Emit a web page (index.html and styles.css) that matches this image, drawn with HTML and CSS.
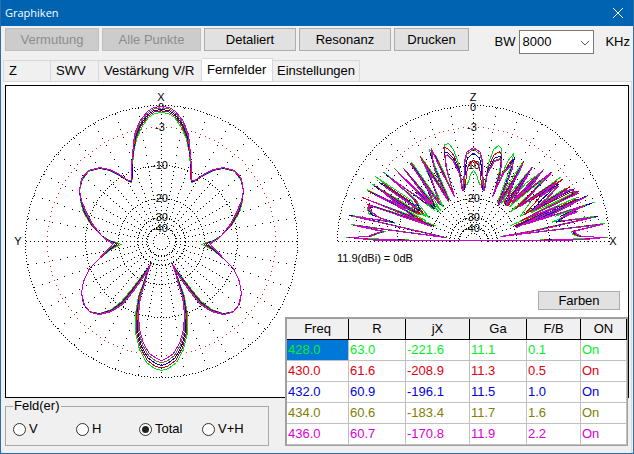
FILE: index.html
```html
<!DOCTYPE html>
<html lang="de">
<head>
    <meta charset="utf-8">
    <title>Graphiken</title>
    <link rel="stylesheet" href="styles.css">
</head>
<body>
    <div class="window">
        <header class="titlebar">
            <h1>Graphiken</h1>
            <button class="close" type="button" aria-label="Close">
                <svg width="10" height="10" viewBox="0 0 10 10"><path d="M0 0L10 10M10 0L0 10"/></svg>
            </button>
        </header>

        <div class="toolbar">
            <button class="btn guess" type="button" disabled>Vermutung</button>
            <button class="btn all" type="button" disabled>Alle Punkte</button>
            <button class="btn detail" type="button">Detaliert</button>
            <button class="btn reso" type="button">Resonanz</button>
            <button class="btn print" type="button">Drucken</button>
            <div class="bandwidth">
                <label for="bw">BW</label>
                <span class="combo">
                    <select id="bw"><option>8000</option></select>
                    <svg width="10" height="6" viewBox="0 0 10 6"><path d="M1 1L5 5L9 1"/></svg>
                </span>
                <span class="unit">KHz</span>
            </div>
        </div>

        <nav class="tabs" role="tablist">
            <button class="tab tab-z" type="button" role="tab">Z</button>
            <button class="tab tab-swv" type="button" role="tab">SWV</button>
            <button class="tab tab-gain" type="button" role="tab">Vestärkung V/R</button>
            <button class="tab tab-far active" type="button" role="tab" aria-selected="true">Fernfelder</button>
            <button class="tab tab-set" type="button" role="tab">Einstellungen</button>
        </nav>

        <main class="panel">
            <div class="charts">
                <svg id="azimuth" class="azimuth" width="312" height="311" viewBox="0 0 312 311"></svg>
                <svg id="elevation" class="elevation" width="310" height="311" viewBox="0 0 310 311"></svg>
            </div>

            <fieldset class="fields">
                <legend>Feld(er)</legend>
                <label><input type="radio" name="field">V</label>
                <label><input type="radio" name="field">H</label>
                <label><input type="radio" name="field" checked>Total</label>
                <label><input type="radio" name="field">V+H</label>
            </fieldset>

            <div class="results">
                <button class="btn colors" type="button">Farben</button>
                <table>
                    <colgroup>
                        <col class="c-freq"><col class="c-r"><col class="c-jx"><col class="c-ga"><col class="c-fb"><col class="c-on">
                    </colgroup>
                    <thead>
                        <tr><th>Freq</th><th>R</th><th>jX</th><th>Ga</th><th>F/B</th><th>ON</th></tr>
                    </thead>
                    <tbody>
                        <tr class="green"><td class="selected">428.0</td><td>63.0</td><td>-221.6</td><td>11.1</td><td>0.1</td><td>On</td></tr>
                        <tr class="red"><td>430.0</td><td>61.6</td><td>-208.9</td><td>11.3</td><td>0.5</td><td>On</td></tr>
                        <tr class="blue"><td>432.0</td><td>60.9</td><td>-196.1</td><td>11.5</td><td>1.0</td><td>On</td></tr>
                        <tr class="olive"><td>434.0</td><td>60.6</td><td>-183.4</td><td>11.7</td><td>1.6</td><td>On</td></tr>
                        <tr class="magenta"><td>436.0</td><td>60.7</td><td>-170.8</td><td>11.9</td><td>2.2</td><td>On</td></tr>
                    </tbody>
                </table>
            </div>
        </main>
    </div>
    <script src="script.js"></script>
</body>
</html>
```

FILE: styles.css
```css
* {
    box-sizing: border-box;
}
body {
    margin: 0;
    font-family: "Liberation Sans", Arial, sans-serif;
    font-size: 13px;
    line-height: 16px;
    color: #000;
}
button, select, input {
    font: inherit;
    color: inherit;
}
.window {
    display: flex;
    flex-direction: column;
    min-height: 100vh;
    background-color: #f0f0f0;
    border: 1px solid #2a6ea5;
    border-top: 0;
    box-shadow: inset 0 -2px 0 #c8e8f8;
}

/* title bar */
.titlebar {
    display: flex;
    justify-content: space-between;
    align-items: center;
    height: 26px;
    padding: 0 10px 0 4px;
    background-color: #0063b1;
    color: #fff;
}
.titlebar h1 {
    margin: 0;
    font-family: "Open Sans", "Noto Sans", sans-serif;
    font-size: 11px;
    font-weight: normal;
}
.close {
    display: flex;
    padding: 0;
    border: 0;
    background: none;
}
.close path {
    stroke: #fff;
    fill: none;
}

/* buttons */
.toolbar {
    display: flex;
    gap: 3px;
    padding: 2px 3px 0 4px;
    height: 32px;
}
.btn {
    height: 23px;
    padding: 0;
    border: 1px solid #adadad;
    background-color: #e1e1e1;
}
.btn:disabled {
    border-color: #bfbfbf;
    background-color: #ccc;
    color: #8c8c8c;
}
.guess { width: 94px; }
.all { width: 99px; }
.detail, .reso { width: 92px; }
.print { width: 75px; }
.bandwidth {
    display: flex;
    align-items: center;
    height: 28px;
    margin-left: auto;
}
.combo {
    position: relative;
    margin: 0 11px 0 4px;
}
.combo select {
    display: block;
    width: 75px;
    height: 24px;
    padding: 0 2px;
    border: 1px solid #7a7a7a;
    border-radius: 0;
    background-color: #fff;
    appearance: none;
}
.combo svg {
    position: absolute;
    right: 4px;
    top: 10px;
    pointer-events: none;
}
.combo path {
    fill: none;
    stroke: #555;
}

/* tabs */
.tabs {
    display: flex;
    align-items: flex-end;
    height: 23px;
    padding-left: 2px;
}
.tab {
    height: 21px;
    padding: 0 0 0 5px;
    border: 1px solid #d9d9d9;
    border-width: 1px 1px 0 0;
    background-color: #f0f0f0;
    text-align: left;
}
.tab-z { width: 48px; border-left-width: 1px; }
.tab-swv { width: 48px; }
.tab-gain { width: 103px; }
.tab-far { width: 71px; }
.tab-set { width: 87px; padding-left: 4px; }
.tab.active {
    height: 23px;
    background-color: #fff;
}

/* plots */
.panel {
    position: relative;
    flex: 1;
    margin: 0 1px 0 2px;
    border: 1px solid #d9d9d9;
    border-width: 1px 1px 0 0;
    padding: 3px 2px 0;
    background: linear-gradient(#fff 4px, #f0f0f0 4px);
}
.charts {
    display: flex;
    border: 1px solid #000;
    background-color: #fff;
    overflow: hidden;
}
.charts svg {
    flex: none;
    shape-rendering: crispEdges;
}
.charts text {
    font-size: 11px;
    text-anchor: middle;
}
.charts .note {
    text-anchor: start;
}
.trace {
    fill: none;
    stroke-width: 1;
    stroke-linejoin: bevel;
}

/* field selection */
.fields {
    display: flex;
    width: 264px;
    height: 46px;
    margin: 2px 0 0;
    padding: 4px 0 0 7px;
    border: 1px solid #a8a8a8;
}
.fields legend {
    height: 12px;
    padding: 0 1px;
    line-height: 12px;
}
.fields label {
    display: flex;
    align-items: center;
    gap: 3px;
    width: 63px;
    height: 26px;
}
.fields input {
    display: grid;
    place-content: center;
    width: 13px;
    height: 13px;
    margin: 0;
    border: 1px solid #333;
    border-radius: 50%;
    background-color: #fff;
    appearance: none;
}
.fields input:checked::before {
    content: "";
    width: 7px;
    height: 7px;
    border-radius: 50%;
    background-color: #222;
}

/* results lie over the lower right of the plots */
.results {
    position: absolute;
    right: 3px;
    bottom: 7px;
    display: flex;
    flex-direction: column;
    align-items: flex-end;
    gap: 7px;
}
.colors {
    width: 82px;
    height: 19px;
    margin-right: 8px;
}
table {
    width: 343px;
    border: 1px solid #a0a0a0;
    border-width: 2px 1px 1px 2px;
    border-spacing: 0;
    table-layout: fixed;
    background-color: #fff;
}
.c-freq { width: 62px; }
.c-r { width: 57px; }
.c-jx { width: 64px; }
.c-ga { width: 57px; }
.c-fb { width: 54px; }
.c-on { width: 46px; }
th, td {
    height: 21px;
    padding: 0 1px;
    border: 1px solid #c0c0c0;
    border-width: 0 1px 1px 0;
    font-weight: normal;
    text-align: left;
}
th {
    border-color: #000;
    background-color: #f0f0f0;
    text-align: center;
}
.selected { background-color: #0078d7; }
.green { color: #00f028; }
.red { color: #e00010; }
.blue { color: #0000d8; }
.olive { color: #808000; }
.magenta { color: #d800d8; }
```

FILE: script.js
```js
const NS = 'http://www.w3.org/2000/svg';
const CX = 155;
const CY = 155;
const COLORS = ['#00e020', '#d00010', '#0000c8', '#707020', '#d000d0'];

// points: x, y, then how far the last frequency lies from the first
const AZIMUTH = [
    [0, -129, 0, -6], [7, -128, 1, -6], [13, -124, 1, -6], [20, -114, 2, -6], [25, -102, 2, -5],
    [28, -88, 1, 0], [29, -74, 1, 0], [29, -64, 1, 0], [30, -59, 0, -2],
    [33, -60, 0, -1], [42, -66, 0, -1], [52, -71, 0, -1], [62, -73, 0, -1], [73, -70, 0, -1], [79, -62, 1, -1],
    [82, -51, 0, 0], [81, -41, -1, 0], [78, -29, -3, 0], [70, -16, -2, 0], [60, -6, 0, 0],
    [52, -1, 3, 0], [45, 1, 5, 0], [40, 3, 9, 0], [45, 5, 6, 0], [52, 9, 3, 0],
    [63, 18, 0, 0], [72, 27, 0, 0], [78, 40, 0, 0], [80, 52, 0, 0], [78, 63, -1, 1],
    [72, 70, -1, 1], [62, 72, 0, 1], [50, 68, 0, 2], [40, 60, -1, 3], [30, 48, -1, 3],
    [20, 35, -1, 2], [14, 27, 0, 2], [10, 21, 1, 2], [14, 30, 0, 2], [18, 41, -1, 2],
    [23, 55, -2, 0], [26, 73, -3, 0], [26, 91, -4, -3], [22, 108, -4, -6], [15, 121, -3, -9], [7, 127, -2, -10], [0, 129, 0, -10]
];

const ZENITH = [
    [-7, -56, -3, 6], [-5, -60, -4, -20], [-3, -67, -4, -22], [0, -71, 0, -23],
    [3, -67, 4, -22], [5, -60, 4, -20], [7, -56, 3, 6]
];

const RIGHT = [
    [11, -55, 0, 5], [15, -78, -1, 10], [20, -92, 1, 12], [25, -96, 2, 14], [28, -93, 0, 13], [27, -75, 0, 8], [20, -46, -1, 1],
    [28, -66, 2, -2], [35, -82, 3, 6], [39, -85, 2, 4], [38, -76, 0, 5], [24, -39, 1, 3],
    [38, -62, 5, -2], [51, -82, -3, 7], [45, -68, -6, 10], [28, -38, 5, 2],
    [60, -76, -3, 4], [31, -34, 9, -6], [54, -60, 6, 2], [67, -69, 1, -1], [34, -33, 10, -12],
    [75, -67, 2, -1], [56, -47, -7, 9], [36, -29, 12, -7], [84, -62, -4, 5], [50, -37, 18, -9],
    [88, -65, -2, 9], [63, -47, 8, 6], [45, -24, 15, -7], [95, -55, -3, 4], [58, -29, 14, -9],
    [92, -44, 8, -10], [104, -51, -2, 4], [46, -20, 8, -4], [82, -34, 5, -2], [37, -16, 6, 2],
    [101, -43, 13, -2], [70, -29, 9, 2], [43, -15, 12, -3], [117, -38, -3, 1], [84, -26, 7, 0],
    [97, -31, 5, 2], [88, -24, 2, 0], [81, -20, 6, 0], [122, -25, -2, 1], [60, -11, 4, 0], [27, -5, 1, 0],
    [131, -18, -3, 1], [98, -10, 2, 0], [99, -7, 5, 0], [105, -5, 4, 0], [134, -4, -3, 0], [116, -3, -4, 1], [50, -1, 0, 0]
];

const LEFT = [
    [-11, -55, 0, 5], [-15, -78, 1, 10], [-20, -92, 0, 12], [-25, -98, -1, 12], [-29, -96, 0, 8], [-28, -78, 1, 6], [-20, -46, 1, 1],
    [-29, -68, -2, 0], [-38, -87, -3, -3], [-43, -89, 1, 4], [-39, -76, 1, 6], [-24, -42, -1, 2],
    [-40, -67, -3, -1], [-54, -87, 3, 7], [-47, -72, 4, 6], [-30, -34, -5, -4],
    [-64, -82, 3, 7], [-48, -56, 4, 7], [-33, -31, -9, -6], [-70, -73, 2, 2], [-47, -46, -6, -4], [-35, -30, -8, -5],
    [-79, -73, 3, 3], [-56, -49, 8, 6], [-40, -32, -12, -10], [-87, -67, 3, 3], [-62, -46, 5, 6], [-45, -24, -12, -9],
    [-95, -63, 4, 7], [-65, -43, 6, 8], [-48, -25, -14, -6], [-99, -56, 2, 2], [-72, -40, 3, 8], [-53, -26, -12, -7],
    [-105, -51, 4, 3], [-74, -35, 8, 5], [-46, -20, -12, -2], [-109, -43, 3, 1], [-63, -25, 5, 3], [-38, -16, -4, 1],
    [-101, -36, -3, 0], [-106, -33, 3, 1], [-102, -27, 2, 1], [-81, -19, -2, -1], [-122, -26, 2, 1],
    [-70, -14, -2, 0], [-27, -4, -2, 0],
    [-122, -17, 3, 1], [-88, -10, -3, 0], [-95, -8, -3, 0], [-103, -5, -3, 0], [-127, -4, 4, 0], [-110, -3, 4, 1], [-50, -1, 0, 0]
];

function add(svg, tag, attrs, text) {
    const el = document.createElementNS(NS, tag);
    for (const key in attrs) el.setAttribute(key, attrs[key]);
    if (text) el.textContent = text;
    svg.appendChild(el);
}

function dot(r, deg) {
    const a = deg * Math.PI / 180;
    return `M${Math.round(CX + r * Math.cos(a))} ${Math.round(CY - r * Math.sin(a))}h1v1h-1z`;
}

function drawGrid(svg, end) {
    let black = '';
    let red = '';
    [8, 14, 24, 43, 76, 136].forEach(r => {
        const step = 180 / Math.PI * 3 / r;
        for (let a = 0; a <= end; a += step) black += dot(r, a);
    });
    for (let a = 0; a <= end; a += 2.5) red += dot(114, a);
    for (let a = 0; a <= end; a += 10) {
        const axis = a % 90 === 0;
        for (let r = 15; r < 136; r += axis || r < 76 ? 4 : 8) black += dot(r, a);
    }
    add(svg, 'path', { d: black, fill: '#000' });
    add(svg, 'path', { d: red, fill: '#e02020' });
}

function drawLabels(svg, top, sideX, side) {
    add(svg, 'text', { x: CX, y: 15 }, top);
    add(svg, 'text', { x: CX, y: 25 }, '0');
    [['-3', 45], ['-10', 83], ['-20', 116], ['-30', 135], ['-40', 146]].forEach(([label, y]) => {
        add(svg, 'text', { x: CX - 1, y: y }, label);
    });
    add(svg, 'text', { x: sideX, y: 159 }, side);
}

function trace(svg, points, t, color, mirror, ripple) {
    const d = points.map(([x, y, dx, dy], i) => {
        // the narrow side lobes wander from one frequency to the next
        const inner = Math.abs(x) > 28 && y < -18;
        const k = ripple && inner ? 1 + 0.035 * Math.sin(i * 2.3 + t * 9) : 1;
        const px = (x + dx * t) * k * (mirror ? -1 : 1);
        return (i ? 'L' : 'M') + (CX + 0.5 + px) + ' ' + (CY + 0.5 + (y + dy * t) * k);
    }).join('');
    add(svg, 'path', { d: d, stroke: color, class: 'trace' });
}

const azimuth = document.getElementById('azimuth');
drawGrid(azimuth, 359);
drawLabels(azimuth, 'X', 12, 'Y');
COLORS.forEach((color, i) => {
    trace(azimuth, AZIMUTH, i / 4, color, false, false);
    trace(azimuth, AZIMUTH, i / 4, color, true, false);
});

const elevation = document.getElementById('elevation');
drawGrid(elevation, 180);
drawLabels(elevation, 'Z', 295, 'X');
add(elevation, 'text', { x: 19, y: 176, class: 'note' }, '11.9(dBi) = 0dB');
[0, 0.45, 0.75, 0.92, 1].forEach((t, i) => {
    trace(elevation, ZENITH, t, COLORS[i], false, false);
    trace(elevation, RIGHT, t, COLORS[i], false, true);
    trace(elevation, LEFT, t, COLORS[i], false, true);
});
// ground line
add(elevation, 'rect', { x: CX - 100, y: CY - 1, width: 200, height: 1, fill: COLORS[4] });
```
